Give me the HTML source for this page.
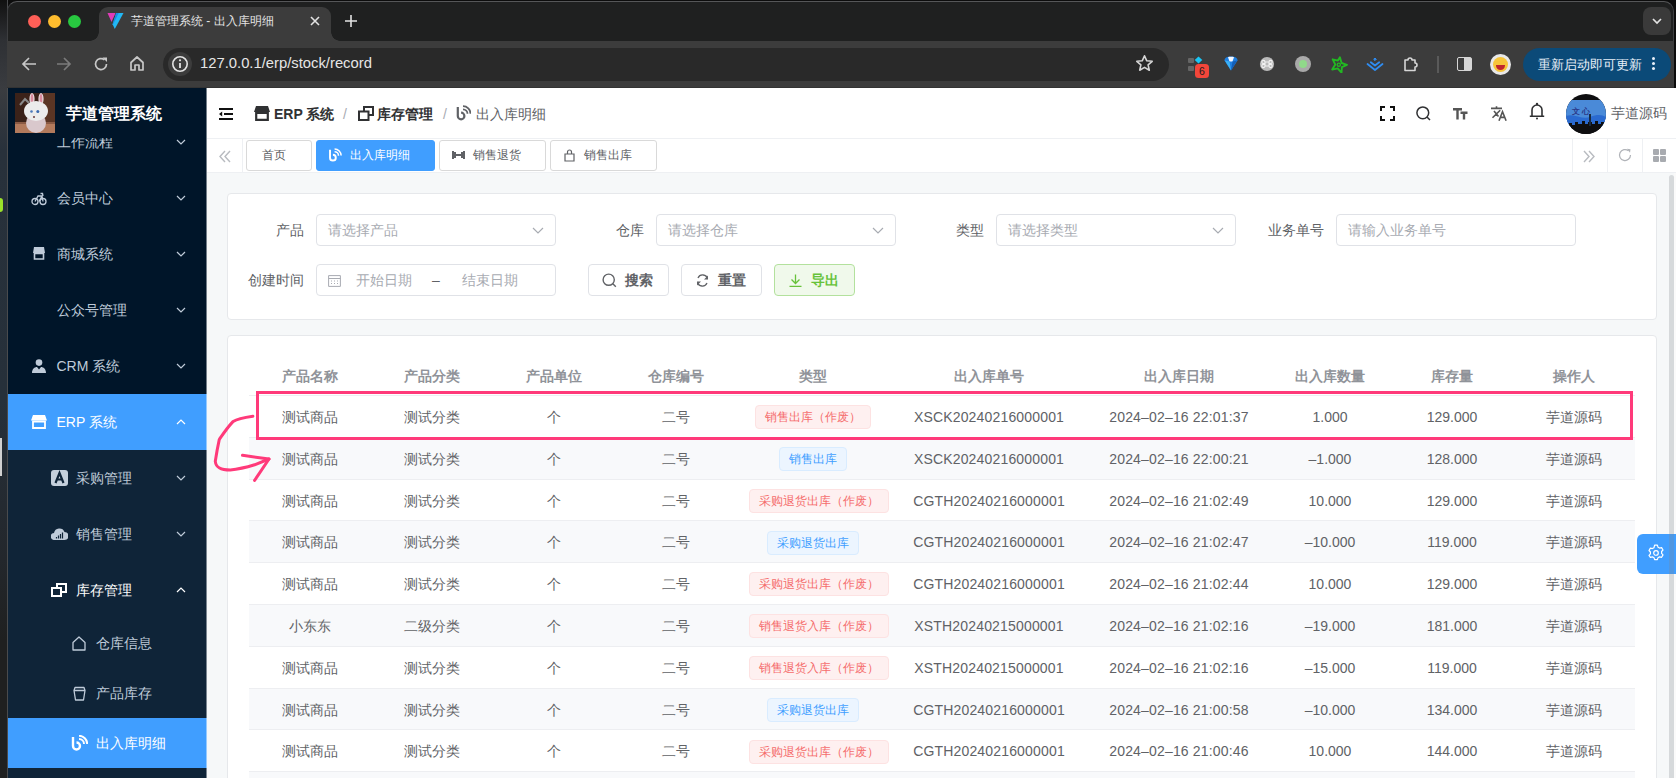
<!DOCTYPE html>
<html><head><meta charset="utf-8">
<style>
*{box-sizing:border-box;margin:0;padding:0}
html,body{width:1676px;height:778px;overflow:hidden;background:#0c0c0c;font-family:"Liberation Sans",sans-serif}
.a{position:absolute}
svg{display:block}
/* chrome */
#strip{left:0;top:0;width:8px;height:778px;background:linear-gradient(180deg,#111 0,#2e3034 40px,#3a3c40 90px,#28313b 150px,#26303a 400px,#23272c 560px,#1f2020 640px,#1f2020 100%);border-right:1px solid #4a4b4d}
#titlebar{left:7px;top:1px;width:1667px;height:41px;background:#1f2020;border-top:1px solid #555658;border-left:1px solid #3d3e40;border-right:1px solid #3d3e40;border-radius:10px 10px 0 0}
#toolbar{left:7px;top:41px;width:1667px;height:47px;background:#3c3c3c;border-bottom:1px solid #333}
.tl{width:13px;height:13px;border-radius:50%;top:15px}
#tab{left:99px;top:7px;width:232px;height:34px;background:#3c3c3c;border-radius:9px 9px 0 0}
#tab:before,#tab:after{content:"";position:absolute;bottom:0;width:9px;height:9px;background:radial-gradient(circle at 0 0,transparent 9px,#3a3a3a 9.5px)}
#tab:before{left:-9px;background:radial-gradient(circle at 0 0,transparent 8.5px,#3c3c3c 9px)}
#tab:after{right:-9px;background:radial-gradient(circle at 100% 0,transparent 8.5px,#3c3c3c 9px)}
.ctext{color:#e3e3e3;font-size:12px;white-space:nowrap}
#url{left:163px;top:48px;width:1006px;height:33px;background:#292929;border-radius:16.5px}
/* app */
#side{left:8px;top:88px;width:199px;z-index:3;height:690px;background:#001529;overflow:hidden}
.mi{position:absolute;left:0;width:199px;height:56px;color:#bfcbd9;font-size:14px;line-height:56px;white-space:nowrap}
.mi .t{position:absolute;left:48.5px;top:0}
.mi .ic{position:absolute;left:24px;top:22px}
.mi .chev{position:absolute;left:168px;top:25px}
#main{left:206px;top:88px;width:1470px;height:690px;background:#f6f8f9;overflow:hidden}
#nav{left:0;top:0;width:1470px;height:51px;background:#fff;border-bottom:1px solid #eef0f3}
#tags{left:0;top:51px;width:1470px;height:34px;background:#fff;border-bottom:1px solid #eef0f3}
.tag{position:absolute;top:1px;height:31px;border:1px solid #d9d9d9;border-radius:3px;font-size:12px;color:#606266;line-height:29.5px;white-space:nowrap}
.card{position:absolute;background:#fff;border:1px solid #e6e8eb;border-radius:4px}
.lbl{position:absolute;font-size:14px;color:#606266;line-height:32px;white-space:nowrap;text-align:right}
.inp{position:absolute;height:32px;border:1px solid #e0e2e7;border-radius:4px;background:#fff;font-size:14px;color:#a8abb2;line-height:30px;white-space:nowrap}
.btn{position:absolute;height:32px;border:1px solid #e0e2e7;border-radius:4px;background:#fff;font-size:14px;color:#606266;line-height:30px;white-space:nowrap}
table{border-collapse:collapse;table-layout:fixed;font-size:14px;color:#606266}
td,th{text-align:center;padding:0;white-space:nowrap;overflow:hidden;border-bottom:1px solid #edeef1}
th{color:#909399;font-weight:bold;height:40px}
td{height:41.8px}
tr.s td{background:#fafafa}
.tg{display:inline-block;height:24px;line-height:22px;padding:0 9px;font-size:12px;border-radius:4px;border:1px solid}
.tr{background:#fef0f0;border-color:#fde2e2;color:#f56c6c}
.tb{background:#ecf5ff;border-color:#d9ecff;color:#409eff}
.row{position:absolute;left:0;width:1386px;display:flex;border-bottom:1px solid #edeef1}
.cell{flex:none;text-align:center;font-size:14px;color:#606266;white-space:nowrap;overflow:hidden;display:block;padding:1px 12px 0;line-height:40.8px}
.cell .tg{vertical-align:middle;position:relative;top:-1px}
.hd .cell{color:#909399;font-weight:bold;line-height:39px;padding-top:1px}
</style></head><body>
<div id="strip" class="a"></div>
<div id="titlebar" class="a"></div>
<div class="a" style="left:0;top:198px;width:3px;height:14px;background:#9be22a;border-radius:0 3px 3px 0"></div>
<div class="a" style="left:0;top:438px;width:2px;height:38px;background:#d0d0d0"></div>
<div id="toolbar" class="a"></div>
<div class="a tl" style="left:28px;background:#fe5f57"></div>
<div class="a tl" style="left:48px;background:#febc2e"></div>
<div class="a tl" style="left:68px;background:#28c840"></div>
<div id="tab" class="a"></div>
<!-- favicon -->
<svg class="a" style="left:107px;top:13px" width="17" height="16" viewBox="0 0 17 16"><path d="M0.5 0h8l-4 9z" fill="#e03cb8"/><path d="M9.2 0h7.3L7.8 16 5.6 11.2z" fill="#22b8f4"/><path d="M9.2 0h2.5L5.9 11.8 5.6 11.2z" fill="#1d86e6"/></svg>
<div class="a ctext" style="left:131px;top:13px">芋道管理系统 - 出入库明细</div>
<svg class="a" style="left:309px;top:15px" width="12" height="12" viewBox="0 0 12 12"><path d="M2 2l8 8M10 2l-8 8" stroke="#e3e3e3" stroke-width="1.6"/></svg>
<svg class="a" style="left:344px;top:14px" width="14" height="14" viewBox="0 0 14 14"><path d="M7 1v12M1 7h12" stroke="#e3e3e3" stroke-width="1.6"/></svg>
<!-- toolbar icons -->
<svg class="a" style="left:21px;top:56px" width="16" height="16" viewBox="0 0 16 16"><path d="M15 8H2M8 2L2 8l6 6" stroke="#c7c7c7" stroke-width="1.7" fill="none"/></svg>
<svg class="a" style="left:56px;top:56px" width="16" height="16" viewBox="0 0 16 16"><path d="M1 8h13M8 2l6 6-6 6" stroke="#7b7b7b" stroke-width="1.7" fill="none"/></svg>
<svg class="a" style="left:93px;top:56px" width="16" height="16" viewBox="0 0 16 16"><path d="M13.5 8A5.5 5.5 0 1 1 11.5 3.8" stroke="#c7c7c7" stroke-width="1.7" fill="none"/><path d="M9.5 1.5h4.5v4.5z" fill="#c7c7c7"/></svg>
<svg class="a" style="left:129px;top:55px" width="16" height="17" viewBox="0 0 16 17"><path d="M2 7.5L8 2l6 5.5V15h-4v-5H6v5H2z" stroke="#c7c7c7" stroke-width="1.7" fill="none" stroke-linejoin="round"/></svg>
<div id="url" class="a"></div>
<div class="a" style="left:168px;top:52px;width:24px;height:24px;border-radius:50%;background:#3c3c3c"></div>
<svg class="a" style="left:171px;top:55px" width="18" height="18" viewBox="0 0 18 18"><circle cx="9" cy="9" r="7.2" stroke="#e3e3e3" stroke-width="1.6" fill="none"/><path d="M9 8v5" stroke="#e3e3e3" stroke-width="1.8"/><circle cx="9" cy="5.3" r="1.1" fill="#e3e3e3"/></svg>
<div class="a" style="left:200px;top:55px;font-size:14.8px;color:#e6e6e6;white-space:nowrap">127.0.0.1/erp/stock/record</div>
<svg class="a" style="left:1135px;top:54px" width="19" height="19" viewBox="0 0 19 19"><path d="M9.5 1.8l2.3 5 5.4.5-4.1 3.6 1.2 5.3-4.8-2.8-4.8 2.8 1.2-5.3L1.8 7.3l5.4-.5z" stroke="#d6d6d6" stroke-width="1.6" fill="none" stroke-linejoin="round"/></svg>
<!-- extensions -->
<div class="a" style="left:1188px;top:58px;width:5.5px;height:5px;background:#666;border-radius:1px"></div>
<div class="a" style="left:1188px;top:65.5px;width:5.5px;height:5px;background:#666;border-radius:1px"></div>
<svg class="a" style="left:1194px;top:56px" width="9" height="8" viewBox="0 0 9 8"><path d="M4.5 0.5L8.3 4 4.5 7.5 0.7 4z" fill="#19c6f6"/></svg>
<div class="a" style="left:1195px;top:64px;width:14px;height:14px;background:#f2463a;border-radius:3.5px;color:#1a1a1a;font-size:10.5px;text-align:center;line-height:14px">6</div>
<svg class="a" style="left:1224px;top:56px" width="14" height="15" viewBox="0 0 14 15"><path d="M0.5 4.5C0.5 2 3 0.6 7 0.6s6.5 1.4 6.5 3.9L7 14.5z" fill="#1f7fe0"/><path d="M4 1.2c1-.5 5-.5 6 0L8.5 5.5h-3z" fill="#f4f8ff"/><path d="M0.8 4.5L5.5 5.5 7 14.5z" fill="#3ab0f5"/><path d="M13.2 4.5L8.5 5.5 7 14.5z" fill="#145fb8"/></svg>
<svg class="a" style="left:1259px;top:56px" width="16" height="16" viewBox="0 0 16 16"><circle cx="8" cy="8" r="7.1" fill="#b9b9b9"/><path d="M6 6h4v4H6zM6 6a1.6 1.6 0 1 0-1.6 1.6H6M10 6a1.6 1.6 0 1 1 1.6 1.6H10M6 10a1.6 1.6 0 1 1-1.6-1.6H6M10 10a1.6 1.6 0 1 0 1.6-1.6H10" stroke="#f2f2f2" stroke-width="1.1" fill="none"/></svg>
<div class="a" style="left:1295px;top:56px;width:16px;height:16px;border-radius:50%;background:#a9a9a9"></div>
<div class="a" style="left:1299px;top:60px;width:8px;height:8px;border-radius:50%;background:#90d98a"></div>
<svg class="a" style="left:1331px;top:56px" width="17" height="17" viewBox="0 0 17 17"><path d="M8.9 1.2L10.6 7l5.4 1.8-5.1 2.4-.4 5.5-3.8-4.3-5.5 1.2L4.3 8.6 1.7 3.3l5.2 1.3z" stroke="#22b822" stroke-width="1.9" fill="none" stroke-linejoin="round"/><circle cx="7.8" cy="8.7" r="1.6" fill="none" stroke="#22b822" stroke-width="1.4"/></svg>
<svg class="a" style="left:1366px;top:57px" width="18" height="15" viewBox="0 0 18 15"><path d="M9 1l1.3 1.3L9 3.6 7.7 2.3z" fill="#2f8cf0" stroke="#2f8cf0" stroke-width="1"/><path d="M4.8 5.2L9 8.5l4.2-3.3M1.5 7L9 13l7.5-6" stroke="#2f8cf0" stroke-width="1.8" fill="none" stroke-linecap="round" stroke-linejoin="round"/></svg>
<svg class="a" style="left:1402px;top:55px" width="18" height="18" viewBox="0 0 18 18"><path d="M3 5h3a2 2 0 1 1 4 0h3v3a2 2 0 1 1 0 4v3.5H3z" stroke="#d6d6d6" stroke-width="1.6" fill="none" stroke-linejoin="round"/></svg>
<div class="a" style="left:1437px;top:56px;width:2px;height:17px;background:#5a5a5a"></div>
<div class="a" style="left:1457px;top:57px;width:15px;height:14px;border:1.6px solid #d6d6d6;border-radius:2px"></div>
<div class="a" style="left:1464px;top:58px;width:7px;height:12px;background:#d6d6d6"></div>
<div class="a" style="left:1490px;top:54px;width:21px;height:21px;border-radius:50%;background:#e8e8e8"></div>
<div class="a" style="left:1493px;top:57px;width:15px;height:15px;border-radius:50%;background:#f7c53a"></div>
<div class="a" style="left:1496px;top:65px;width:9px;height:5px;border-radius:0 0 5px 5px;background:#c0262d"></div>
<div class="a" style="left:1523px;top:48px;width:148px;height:33px;border-radius:17px;background:#0b4a78"></div>
<div class="a" style="left:1538px;top:56px;font-size:13px;color:#e8f0f8;white-space:nowrap">重新启动即可更新</div>
<div class="a" style="left:1652px;top:57px;width:3px;height:3px;border-radius:50%;background:#e8f0f8;box-shadow:0 5px 0 #e8f0f8,0 10px 0 #e8f0f8"></div>
<div class="a" style="left:1643px;top:7px;width:28px;height:28px;border-radius:8px;background:#3a3a3a"></div>
<svg class="a" style="left:1651px;top:16px" width="12" height="10" viewBox="0 0 12 10"><path d="M2 3l4 4 4-4" stroke="#e3e3e3" stroke-width="1.7" fill="none"/></svg>

<!-- SIDEBAR -->
<div id="side" class="a">
  <div class="a" style="left:0;top:362px;width:199px;height:328px;background:#0f2438"></div>
    <div class="a" style="left:0;top:306px;width:199px;height:56px;background:#409eff"></div>
  <div class="a" style="left:0;top:630px;width:199px;height:50px;background:#409eff"></div>
  <div class="mi" style="top:26px"><span class="t">工作流程</span><svg class="chev" width="10" height="6" viewBox="0 0 10 6"><path d="M1 1l4 4 4-4" stroke="#bfcbd9" stroke-width="1.2" fill="none"/></svg></div>
  <div class="mi" style="top:82px"><svg class="ic" style="left:23px;top:22px" width="16" height="14" viewBox="0 0 16 14"><circle cx="4" cy="9.5" r="3" stroke="#bfcbd9" stroke-width="1.3" fill="none"/><circle cx="12" cy="9.5" r="3" stroke="#bfcbd9" stroke-width="1.3" fill="none"/><path d="M4 9.5L7 4h4l1 5.5M8 9.5L11 4M9.5 1.5h2l.5 2.5" stroke="#bfcbd9" stroke-width="1.3" fill="none"/></svg><span class="t">会员中心</span><svg class="chev" width="10" height="6" viewBox="0 0 10 6"><path d="M1 1l4 4 4-4" stroke="#bfcbd9" stroke-width="1.2" fill="none"/></svg></div>
  <div class="mi" style="top:138px"><svg class="ic" style="left:25px;top:21px" width="12" height="13" viewBox="0 0 12 13"><path d="M1 0h10l1 6H0z" fill="#bfcbd9"/><path d="M1.5 6.5h9V12h-9z" stroke="#bfcbd9" stroke-width="1.6" fill="none"/></svg><span class="t">商城系统</span><svg class="chev" width="10" height="6" viewBox="0 0 10 6"><path d="M1 1l4 4 4-4" stroke="#bfcbd9" stroke-width="1.2" fill="none"/></svg></div>
  <div class="mi" style="top:194px"><span class="t">公众号管理</span><svg class="chev" width="10" height="6" viewBox="0 0 10 6"><path d="M1 1l4 4 4-4" stroke="#bfcbd9" stroke-width="1.2" fill="none"/></svg></div>
  <div class="mi" style="top:250px"><svg class="ic" style="left:24px;top:21px" width="14" height="14" viewBox="0 0 14 14"><circle cx="7" cy="3.6" r="3.3" fill="#bfcbd9"/><path d="M0 14c0-4 2.5-6 5-6l2 2.5L9 8c2.5 0 5 2 5 6z" fill="#bfcbd9"/></svg><span class="t">CRM 系统</span><svg class="chev" width="10" height="6" viewBox="0 0 10 6"><path d="M1 1l4 4 4-4" stroke="#bfcbd9" stroke-width="1.2" fill="none"/></svg></div>
  <div class="mi" style="top:306px;color:#fff"><svg class="ic" style="left:23px;top:21px" width="16" height="14" viewBox="0 0 16 14"><path d="M2 0h12l2 5.5H0z" fill="#fff"/><path d="M2 6.5h12V13H2z" stroke="#fff" stroke-width="1.8" fill="none"/></svg><span class="t">ERP 系统</span><svg class="chev" width="10" height="6" viewBox="0 0 10 6"><path d="M1 5l4-4 4 4" stroke="#fff" stroke-width="1.2" fill="none"/></svg></div>
  <div class="mi" style="top:362px"><svg class="ic" style="left:43px;top:20px" width="17" height="16" viewBox="0 0 17 16"><rect x="0" y="0" width="17" height="16" rx="3" fill="#c5d0dc"/><path d="M4.5 13L8.5 3l4 10M6.5 9.5h4" stroke="#0f2438" stroke-width="2.2" fill="none"/></svg><span class="t" style="left:68px">采购管理</span><svg class="chev" width="10" height="6" viewBox="0 0 10 6"><path d="M1 1l4 4 4-4" stroke="#bfcbd9" stroke-width="1.2" fill="none"/></svg></div>
  <div class="mi" style="top:418px"><svg class="ic" style="left:43px;top:22px" width="17" height="12" viewBox="0 0 17 12"><path d="M3.5 12A3.5 3.5 0 0 1 3 5a5.5 5.5 0 0 1 10.5-1A4 4 0 0 1 13.5 12z" fill="#bfcbd9"/><path d="M5.5 10.5v-1.5M7.5 10.5v-3M9.5 10.5v-4.5M11.5 10.5v-6" stroke="#0f2438" stroke-width="1.2"/></svg><span class="t" style="left:68px">销售管理</span><svg class="chev" width="10" height="6" viewBox="0 0 10 6"><path d="M1 1l4 4 4-4" stroke="#bfcbd9" stroke-width="1.2" fill="none"/></svg></div>
  <div class="mi" style="top:474px;color:#fff"><svg class="ic" style="left:43px;top:21px" width="16" height="14" viewBox="0 0 16 14"><path d="M6 4.5V1h9v8h-4M1 5h9v8H1z" stroke="#fff" stroke-width="2" fill="none"/></svg><span class="t" style="left:68px">库存管理</span><svg class="chev" width="10" height="6" viewBox="0 0 10 6"><path d="M1 5l4-4 4 4" stroke="#fff" stroke-width="1.2" fill="none"/></svg></div>
  <div class="mi" style="top:530px;height:50px;line-height:50px"><svg class="ic" style="left:64px;top:18px" width="14" height="15" viewBox="0 0 14 15"><path d="M1 6.5L7 1l6 5.5V14H1z" stroke="#bfcbd9" stroke-width="1.3" fill="none" stroke-linejoin="round"/></svg><span class="t" style="left:88px">仓库信息</span></div>
  <div class="mi" style="top:580px;height:50px;line-height:50px"><svg class="ic" style="left:65px;top:18px" width="13" height="15" viewBox="0 0 13 15"><path d="M1 4.5h11M2 1.5h9l1 3-1.5 9.5h-8L1 4.5z" stroke="#bfcbd9" stroke-width="1.3" fill="none" stroke-linejoin="round"/></svg><span class="t" style="left:88px">产品库存</span></div>
  <div class="mi" style="top:630px;height:50px;line-height:50px;color:#fff"><svg class="ic" style="left:63px;top:17px" width="17" height="16" viewBox="0 0 17 16"><path d="M2 2v9a3.5 3.5 0 1 0 3.5-3.5" stroke="#fff" stroke-width="2.4" fill="none"/><path d="M8 4a5 5 0 0 1 5 5M8 0.8a8.2 8.2 0 0 1 8.2 8.2" stroke="#fff" stroke-width="2" fill="none"/></svg><span class="t" style="left:88px">出入库明细</span></div>
  <div class="a" style="left:0;top:0;width:199px;height:50px;background:#001529"></div>
  <svg class="a" style="left:7px;top:5px" width="40" height="40" viewBox="0 0 40 40">
<rect width="40" height="40" fill="#3b2219"/>
<rect x="28" y="0" width="12" height="30" fill="#5a3524"/>
<rect x="0" y="29" width="40" height="11" fill="#b27a5c"/>
<rect x="0" y="29" width="40" height="2" fill="#8a5a44"/>
<path d="M5 12l5-6 4 4" stroke="#8a8a8a" stroke-width="2" fill="none"/>
<ellipse cx="17" cy="6" rx="2.6" ry="6" fill="#e8d8dc"/><ellipse cx="17" cy="6" rx="1.3" ry="5" fill="#d88a9c"/>
<ellipse cx="26" cy="6" rx="2.6" ry="6" fill="#e8d8dc"/><ellipse cx="26" cy="6" rx="1.3" ry="5" fill="#d88a9c"/>
<ellipse cx="21" cy="30" rx="10" ry="10" fill="#d9c8cc"/>
<ellipse cx="21" cy="18" rx="12" ry="10" fill="#ececec"/>
<circle cx="16.5" cy="18.5" r="1.3" fill="#4a78b8"/><circle cx="22.8" cy="18.5" r="1.5" fill="#3a6ab0"/>
<circle cx="19" cy="24" r="1" fill="#6a3a3a"/>
</svg>
<div class="a" style="left:58px;top:16px;font-size:16px;font-weight:bold;color:#fff;white-space:nowrap;line-height:20px">芋道管理系统</div>

<div class="a" style="left:198px;top:0;width:1px;height:690px;background:rgba(255,255,255,0.45)"></div>
</div>

<!-- MAIN -->

<div id="main" class="a">
  <div id="nav" class="a"><svg class="a" style="left:13px;top:20px" width="14" height="12" viewBox="0 0 14 12"><path d="M0 1h14M5 6h9M0 11h14" stroke="#111" stroke-width="2"/><path d="M0 6l3.2-2.5v5z" fill="#111"/></svg>
<svg class="a" style="left:48px;top:18px" width="16" height="15" viewBox="0 0 16 15"><path d="M2 0h12l2 6H0z" fill="#303133"/><path d="M2.2 7h11.6v6.8H2.2z" stroke="#303133" stroke-width="2.2" fill="none"/></svg>
<div class="a" style="left:68px;top:16px;font-size:14px;font-weight:bold;color:#303133;white-space:nowrap;line-height:20px">ERP 系统</div>
<div class="a" style="left:137px;top:16px;font-size:14px;color:#a8abb2;line-height:20px">/</div>
<svg class="a" style="left:152px;top:18px" width="16" height="15" viewBox="0 0 16 15"><path d="M6 5V1h9v8h-4M1 5.5h9.5v8.5H1z" stroke="#303133" stroke-width="2" fill="none"/></svg>
<div class="a" style="left:171px;top:16px;font-size:14px;font-weight:bold;color:#303133;white-space:nowrap;line-height:20px">库存管理</div>
<div class="a" style="left:237px;top:16px;font-size:14px;color:#a8abb2;line-height:20px">/</div>
<svg class="a" style="left:250px;top:17px" width="15" height="16" viewBox="0 0 15 16"><path d="M1.8 2v9a3.3 3.3 0 1 0 3.3-3.3" stroke="#606266" stroke-width="2.2" fill="none"/><path d="M7 4.3a4.5 4.5 0 0 1 4.5 4.5M7 1.2a7.5 7.5 0 0 1 7.5 7.5" stroke="#606266" stroke-width="1.8" fill="none"/></svg>
<div class="a" style="left:270px;top:16px;font-size:14px;color:#606266;white-space:nowrap;line-height:20px">出入库明细</div>
<svg class="a" style="left:1174px;top:18px" width="15" height="15" viewBox="0 0 15 15"><path d="M1 5V1h4M10 1h4v4M14 10v4h-4M5 14H1v-4" stroke="#111" stroke-width="2" fill="none"/></svg>
<svg class="a" style="left:1210px;top:18px" width="15" height="15" viewBox="0 0 15 15"><circle cx="6.8" cy="6.8" r="5.9" stroke="#303133" stroke-width="1.5" fill="none"/><path d="M11 11l3 3" stroke="#303133" stroke-width="1.5"/></svg>
<svg class="a" style="left:1247px;top:20px" width="15" height="12" viewBox="0 0 15 12"><path d="M0 1.2h9M4.5 1.2V11.5M7.5 4.8h7M11 4.8v6.7" stroke="#555" stroke-width="2.4" fill="none"/></svg>
<svg class="a" style="left:1285px;top:18px" width="16" height="16" viewBox="0 0 16 16"><path d="M0 2.4h11M5.5 0.3v2.2M3 5l4.5 5.5M9.2 4.2L1.5 11.8M8 14.8l3.5-9 3.6 9M9.3 11.4h4.4" stroke="#555" stroke-width="1.6" fill="none"/></svg>
<svg class="a" style="left:1323px;top:14px" width="16" height="18" viewBox="0 0 16 18"><path d="M3 14V8a5 5 0 0 1 10 0v6M0.8 14.2h14.4" stroke="#303133" stroke-width="1.6" fill="none"/><circle cx="8" cy="2" r="1.2" fill="#303133"/><circle cx="8" cy="16.5" r="1" fill="#303133"/></svg>
<svg class="a" style="left:1360px;top:6px" width="40" height="40" viewBox="0 0 40 40"><defs><clipPath id="avc"><circle cx="20" cy="20" r="20"/></clipPath></defs>
<g clip-path="url(#avc)"><rect width="40" height="40" fill="#0e0e10"/>
<rect x="0" y="6" width="40" height="27" fill="#4a8ad8"/>
<path d="M0 22c8-3 16 4 24 1s12-2 16 0v10H0z" fill="#2a6ad0"/>
<path d="M0 34v-3h3v-2h3v2h3v-3h3v2h4v-3h3v3h3v-2h4v2h3v-3h3v3h3v-2h3v8z" fill="#0e0e10"/><rect x="0" y="33" width="40" height="8" fill="#0e0e10"/>
<rect x="23" y="20" width="2" height="12" fill="#1a2a40"/>
<text x="6" y="20" font-size="8" font-weight="bold" fill="#2a3a8a" font-family="Liberation Sans,sans-serif">文 心</text>
</g></svg>
<div class="a" style="left:1405px;top:15px;font-size:14px;color:#606266;white-space:nowrap;line-height:20px">芋道源码</div>
</div>
  <div id="tags" class="a"><div class="a" style="left:36px;top:0;width:1px;height:33px;background:#eef0f3"></div>
<svg class="a" style="left:13px;top:11px" width="12" height="13" viewBox="0 0 12 13"><path d="M6 1L1 6.5 6 12M11 1L6 6.5 11 12" stroke="#b8bbc0" stroke-width="1.4" fill="none"/></svg>
<div class="tag" style="left:40px;width:66px"><span class="a" style="left:15px;top:0">首页</span></div>
<div class="tag" style="left:110px;width:119px;background:#409eff;border-color:#409eff;color:#fff"><svg class="a" style="left:11px;top:7px" width="14" height="14" viewBox="0 0 15 16"><path d="M1.8 2v9a3.3 3.3 0 1 0 3.3-3.3" stroke="#fff" stroke-width="2.2" fill="none"/><path d="M7 4.3a4.5 4.5 0 0 1 4.5 4.5M7 1.2a7.5 7.5 0 0 1 7.5 7.5" stroke="#fff" stroke-width="1.8" fill="none"/></svg><span class="a" style="left:33px;top:0">出入库明细</span></div>
<div class="tag" style="left:233px;width:107px"><svg class="a" style="left:12px;top:10px" width="13" height="8" viewBox="0 0 13 8"><path d="M1 0v8M3 1v6M12 0v8M10 1v6M3 4h7" stroke="#606266" stroke-width="2"/></svg><span class="a" style="left:33px;top:0">销售退货</span></div>
<div class="tag" style="left:344px;width:107px"><svg class="a" style="left:13px;top:8px" width="11" height="13" viewBox="0 0 11 13"><path d="M1 5h9v7H1zM3.5 5V3a2 2 0 0 1 4 0v2" stroke="#606266" stroke-width="1.2" fill="none"/></svg><span class="a" style="left:33px;top:0">销售出库</span></div>
<div class="a" style="left:1366px;top:0;width:1px;height:33px;background:#eef0f3"></div>
<div class="a" style="left:1401px;top:0;width:1px;height:33px;background:#eef0f3"></div>
<div class="a" style="left:1436px;top:0;width:1px;height:33px;background:#eef0f3"></div>
<svg class="a" style="left:1377px;top:11px" width="12" height="13" viewBox="0 0 12 13"><path d="M1 1l5 5.5L1 12M6 1l5 5.5L6 12" stroke="#b8bbc0" stroke-width="1.4" fill="none"/></svg>
<svg class="a" style="left:1412px;top:9px" width="14" height="14" viewBox="0 0 14 14"><path d="M12.5 7A5.5 5.5 0 1 1 10.5 2.8" stroke="#b0b3b8" stroke-width="1.2" fill="none"/><path d="M9 0.8l3.5 0.5-0.5 3.5z" fill="#b0b3b8"/></svg>
<div class="a" style="left:1447px;top:10px;width:5.5px;height:5.5px;background:#a8abb0;border-radius:1px;box-shadow:7px 0 0 #a8abb0,0 7px 0 #a8abb0,7px 7px 0 #a8abb0"></div>
</div>
  
<div class="card" style="left:21px;top:105px;width:1430px;height:127px"></div>
<div class="lbl" style="left:30px;width:68px;top:126px">产品</div>
<div class="inp" style="left:110px;top:126px;width:240px"><span class="a" style="left:11px;top:0">请选择产品</span><svg class="a" style="right:11px;top:12px" width="12" height="7" viewBox="0 0 12 7"><path d="M1 1l5 5 5-5" stroke="#a8abb2" stroke-width="1.2" fill="none"/></svg></div>
<div class="lbl" style="left:370px;width:68px;top:126px">仓库</div>
<div class="inp" style="left:450px;top:126px;width:240px"><span class="a" style="left:11px;top:0">请选择仓库</span><svg class="a" style="right:11px;top:12px" width="12" height="7" viewBox="0 0 12 7"><path d="M1 1l5 5 5-5" stroke="#a8abb2" stroke-width="1.2" fill="none"/></svg></div>
<div class="lbl" style="left:710px;width:68px;top:126px">类型</div>
<div class="inp" style="left:790px;top:126px;width:240px"><span class="a" style="left:11px;top:0">请选择类型</span><svg class="a" style="right:11px;top:12px" width="12" height="7" viewBox="0 0 12 7"><path d="M1 1l5 5 5-5" stroke="#a8abb2" stroke-width="1.2" fill="none"/></svg></div>
<div class="lbl" style="left:1050px;width:68px;top:126px">业务单号</div>
<div class="inp" style="left:1130px;top:126px;width:240px"><span class="a" style="left:11px;top:0">请输入业务单号</span></div>
<div class="lbl" style="left:30px;width:68px;top:176px">创建时间</div>
<div class="inp" style="left:110px;top:176px;width:240px">
 <svg class="a" style="left:11px;top:9px" width="13" height="13" viewBox="0 0 13 13"><path d="M0.6 1.6h11.8v10.8H0.6zM0.6 4.5h11.8M3 7h1M6 7h1M9 7h1M3 9.5h1M6 9.5h1M9 9.5h1" stroke="#a8abb2" stroke-width="1" fill="none"/></svg>
 <span class="a" style="left:39px;top:0">开始日期</span>
 <span class="a" style="left:115px;top:0;color:#606266">–</span>
 <span class="a" style="left:145px;top:0">结束日期</span>
</div>
<div class="btn" style="left:382px;top:176px;width:81px"><svg class="a" style="left:13px;top:8px" width="15" height="15" viewBox="0 0 15 15"><circle cx="6.7" cy="6.7" r="5.6" stroke="#606266" stroke-width="1.4" fill="none"/><path d="M10.8 10.8l3 3" stroke="#606266" stroke-width="1.4"/></svg><span class="a" style="left:36px;top:0;font-weight:bold">搜索</span></div>
<div class="btn" style="left:475px;top:176px;width:81px"><svg class="a" style="left:14px;top:9px" width="13" height="13" viewBox="0 0 13 13"><path d="M11.5 5A5 5 0 0 0 2 4M1.5 8A5 5 0 0 0 11 9" stroke="#606266" stroke-width="1.3" fill="none"/><path d="M12 1.5v4H8zM1 11.5v-4h4z" fill="#606266"/></svg><span class="a" style="left:36px;top:0;font-weight:bold">重置</span></div>
<div class="btn" style="left:568px;top:176px;width:81px;background:#f0f9eb;border-color:#b3e19d;color:#67c23a"><svg class="a" style="left:14px;top:9px" width="13" height="13" viewBox="0 0 13 13"><path d="M6.5 0.5v9M2.5 5.5l4 4 4-4M0.5 12.5h12" stroke="#67c23a" stroke-width="1.3" fill="none"/></svg><span class="a" style="left:36px;top:0;font-weight:bold">导出</span></div>

  <div class="card" style="left:21px;top:247px;width:1430px;height:600px"></div><div class="a" style="left:43px;top:268px;width:1387px"><div class="row hd" style="top:0px;height:40px;"><div class="cell" style="width:122px">产品名称</div><div class="cell" style="width:122px">产品分类</div><div class="cell" style="width:122px">产品单位</div><div class="cell" style="width:122px">仓库编号</div><div class="cell" style="width:152px">类型</div><div class="cell" style="width:200px">出入库单号</div><div class="cell" style="width:180px">出入库日期</div><div class="cell" style="width:122px">出入库数量</div><div class="cell" style="width:122px">库存量</div><div class="cell" style="width:122px">操作人</div></div><div class="row " style="top:40.0px;height:41.8px;"><div class="cell" style="width:122px">测试商品</div><div class="cell" style="width:122px">测试分类</div><div class="cell" style="width:122px">个</div><div class="cell" style="width:122px">二号</div><div class="cell" style="width:152px"><span class="tg tr">销售出库（作废）</span></div><div class="cell" style="width:200px"><span style="letter-spacing:0.17px">XSCK20240216000001</span></div><div class="cell" style="width:180px"><span style="letter-spacing:0.17px">2024–02–16 22:01:37</span></div><div class="cell" style="width:122px">1.000</div><div class="cell" style="width:122px">129.000</div><div class="cell" style="width:122px">芋道源码</div></div><div class="row " style="top:81.8px;height:41.8px;background:#f8f9fb;"><div class="cell" style="width:122px">测试商品</div><div class="cell" style="width:122px">测试分类</div><div class="cell" style="width:122px">个</div><div class="cell" style="width:122px">二号</div><div class="cell" style="width:152px"><span class="tg tb">销售出库</span></div><div class="cell" style="width:200px"><span style="letter-spacing:0.17px">XSCK20240216000001</span></div><div class="cell" style="width:180px"><span style="letter-spacing:0.17px">2024–02–16 22:00:21</span></div><div class="cell" style="width:122px">–1.000</div><div class="cell" style="width:122px">128.000</div><div class="cell" style="width:122px">芋道源码</div></div><div class="row " style="top:123.6px;height:41.8px;"><div class="cell" style="width:122px">测试商品</div><div class="cell" style="width:122px">测试分类</div><div class="cell" style="width:122px">个</div><div class="cell" style="width:122px">二号</div><div class="cell" style="width:152px"><span class="tg tr">采购退货出库（作废）</span></div><div class="cell" style="width:200px"><span style="letter-spacing:0.17px">CGTH20240216000001</span></div><div class="cell" style="width:180px"><span style="letter-spacing:0.17px">2024–02–16 21:02:49</span></div><div class="cell" style="width:122px">10.000</div><div class="cell" style="width:122px">129.000</div><div class="cell" style="width:122px">芋道源码</div></div><div class="row " style="top:165.4px;height:41.8px;background:#f8f9fb;"><div class="cell" style="width:122px">测试商品</div><div class="cell" style="width:122px">测试分类</div><div class="cell" style="width:122px">个</div><div class="cell" style="width:122px">二号</div><div class="cell" style="width:152px"><span class="tg tb">采购退货出库</span></div><div class="cell" style="width:200px"><span style="letter-spacing:0.17px">CGTH20240216000001</span></div><div class="cell" style="width:180px"><span style="letter-spacing:0.17px">2024–02–16 21:02:47</span></div><div class="cell" style="width:122px">–10.000</div><div class="cell" style="width:122px">119.000</div><div class="cell" style="width:122px">芋道源码</div></div><div class="row " style="top:207.2px;height:41.8px;"><div class="cell" style="width:122px">测试商品</div><div class="cell" style="width:122px">测试分类</div><div class="cell" style="width:122px">个</div><div class="cell" style="width:122px">二号</div><div class="cell" style="width:152px"><span class="tg tr">采购退货出库（作废）</span></div><div class="cell" style="width:200px"><span style="letter-spacing:0.17px">CGTH20240216000001</span></div><div class="cell" style="width:180px"><span style="letter-spacing:0.17px">2024–02–16 21:02:44</span></div><div class="cell" style="width:122px">10.000</div><div class="cell" style="width:122px">129.000</div><div class="cell" style="width:122px">芋道源码</div></div><div class="row " style="top:249.0px;height:41.8px;background:#f8f9fb;"><div class="cell" style="width:122px">小东东</div><div class="cell" style="width:122px">二级分类</div><div class="cell" style="width:122px">个</div><div class="cell" style="width:122px">二号</div><div class="cell" style="width:152px"><span class="tg tr">销售退货入库（作废）</span></div><div class="cell" style="width:200px"><span style="letter-spacing:0.17px">XSTH20240215000001</span></div><div class="cell" style="width:180px"><span style="letter-spacing:0.17px">2024–02–16 21:02:16</span></div><div class="cell" style="width:122px">–19.000</div><div class="cell" style="width:122px">181.000</div><div class="cell" style="width:122px">芋道源码</div></div><div class="row " style="top:290.8px;height:41.8px;"><div class="cell" style="width:122px">测试商品</div><div class="cell" style="width:122px">测试分类</div><div class="cell" style="width:122px">个</div><div class="cell" style="width:122px">二号</div><div class="cell" style="width:152px"><span class="tg tr">销售退货入库（作废）</span></div><div class="cell" style="width:200px"><span style="letter-spacing:0.17px">XSTH20240215000001</span></div><div class="cell" style="width:180px"><span style="letter-spacing:0.17px">2024–02–16 21:02:16</span></div><div class="cell" style="width:122px">–15.000</div><div class="cell" style="width:122px">119.000</div><div class="cell" style="width:122px">芋道源码</div></div><div class="row " style="top:332.6px;height:41.8px;background:#f8f9fb;"><div class="cell" style="width:122px">测试商品</div><div class="cell" style="width:122px">测试分类</div><div class="cell" style="width:122px">个</div><div class="cell" style="width:122px">二号</div><div class="cell" style="width:152px"><span class="tg tb">采购退货出库</span></div><div class="cell" style="width:200px"><span style="letter-spacing:0.17px">CGTH20240216000001</span></div><div class="cell" style="width:180px"><span style="letter-spacing:0.17px">2024–02–16 21:00:58</span></div><div class="cell" style="width:122px">–10.000</div><div class="cell" style="width:122px">134.000</div><div class="cell" style="width:122px">芋道源码</div></div><div class="row " style="top:374.4px;height:41.8px;"><div class="cell" style="width:122px">测试商品</div><div class="cell" style="width:122px">测试分类</div><div class="cell" style="width:122px">个</div><div class="cell" style="width:122px">二号</div><div class="cell" style="width:152px"><span class="tg tr">采购退货出库（作废）</span></div><div class="cell" style="width:200px"><span style="letter-spacing:0.17px">CGTH20240216000001</span></div><div class="cell" style="width:180px"><span style="letter-spacing:0.17px">2024–02–16 21:00:46</span></div><div class="cell" style="width:122px">10.000</div><div class="cell" style="width:122px">144.000</div><div class="cell" style="width:122px">芋道源码</div></div><div class="row " style="top:416.2px;height:41.8px;background:#f8f9fb;"><div class="cell" style="width:122px">测试商品</div><div class="cell" style="width:122px">测试分类</div><div class="cell" style="width:122px">个</div><div class="cell" style="width:122px">二号</div><div class="cell" style="width:152px"><span class="tg tb">采购退货出库</span></div><div class="cell" style="width:200px"><span style="letter-spacing:0.17px">CGTH20240216000001</span></div><div class="cell" style="width:180px"><span style="letter-spacing:0.17px">2024–02–16 21:00:40</span></div><div class="cell" style="width:122px">–10.000</div><div class="cell" style="width:122px">134.000</div><div class="cell" style="width:122px">芋道源码</div></div></div><svg class="a" style="left:0;top:0" width="1470" height="690" viewBox="0 0 1470 690">
<rect x="51.5" y="304.5" width="1374" height="46" fill="none" stroke="#ff3a7a" stroke-width="3"/>
<path d="M46.9 328.2C38 329.5 31 331 27.2 333.4C20 341 14.5 350 13.3 351.4C11 362 9.3 373.3 9.3 373.3C10 380 15 382 24.3 382C35 381 48.6 376.8 48.6 376.8L63 371" stroke="#ff3a7a" stroke-width="3" fill="none" stroke-linecap="round" stroke-linejoin="round"/>
<path d="M36.5 367.3L63 371L48.6 392.4" stroke="#ff3a7a" stroke-width="3" fill="none" stroke-linecap="round" stroke-linejoin="round"/>
</svg>
<div class="a" style="left:1468px;top:85px;width:2px;height:605px;background:#fafafa"></div><div class="a" style="left:1431px;top:446px;width:40px;height:40px;background:#409eff;border-radius:6px 0 0 6px"></div>
<svg class="a" style="left:1442px;top:456px" width="16" height="17" viewBox="0 0 16 17"><path d="M6.6 1.2h2.8l.6 2 1.6.9 2-.5 1.4 2.4-1.4 1.5v1.9l1.4 1.5-1.4 2.4-2-.5-1.6.9-.6 2H6.6l-.6-2-1.6-.9-2 .5L1 11.4l1.4-1.5V8L1 6.5 2.4 4.1l2 .5L6 3.7z" stroke="#fff" stroke-width="1.2" fill="none" stroke-linejoin="round"/><circle cx="8" cy="8.95" r="2.3" stroke="#fff" stroke-width="1.2" fill="none"/></svg>
<div class="a" style="left:1463px;top:87px;width:5px;height:603px;background:rgba(130,134,140,0.27);border-radius:2.5px 2.5px 0 0"></div>

</div>
</body></html>
